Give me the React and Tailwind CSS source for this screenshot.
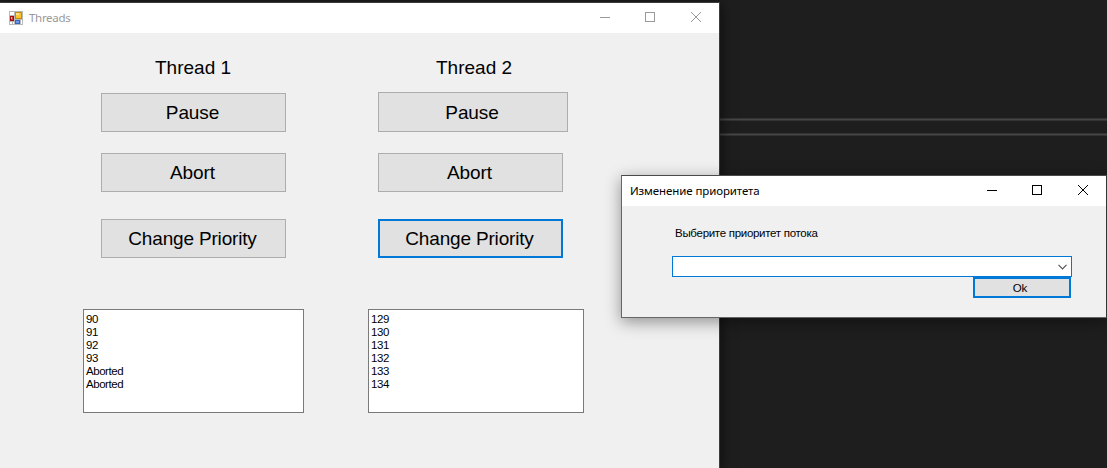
const buttonBase =
  "flex items-center justify-center bg-[#e1e1e1] text-[19px] leading-[22px] text-black whitespace-nowrap";

function CaptionButtons({ className }) {
  return (
    <div className={`flex h-[30px] shrink-0 ${className}`}>
      <svg width="45" height="30" viewBox="0 0 45 30" fill="none" stroke="currentColor" shapeRendering="crispEdges">
        <path d="M17 14.5h10" />
      </svg>
      <svg width="45" height="30" viewBox="0 0 45 30" fill="none" stroke="currentColor" shapeRendering="crispEdges">
        <rect x="17.5" y="9.5" width="9" height="9" />
      </svg>
      <svg width="46" height="30" viewBox="0 0 46 30" fill="none" stroke="currentColor" strokeWidth="1">
        <path d="M18 9l10 10M28 9l-10 10" />
      </svg>
    </div>
  );
}

function FormIcon() {
  return (
    <svg width="14" height="14" viewBox="0 0 14 14" shapeRendering="crispEdges">
      <rect width="14" height="14" fill="#b9b9b9" />
      <path fill="#fff" d="M1 1h4v3H1zM1 11h2v2H1zM4 11h1v2H4zM12 9h1v4h-1z" />
      <rect x="1" y="5" width="4" height="5" fill="#a01010" />
      <rect x="2" y="6" width="2" height="3" fill="#c93a35" />
      <rect x="2" y="6" width="1" height="2" fill="#f0b0a8" />
      <rect x="6" y="1" width="7" height="7" fill="#c58b0a" />
      <rect x="7" y="2" width="5" height="5" fill="#fbc62c" />
      <rect x="7" y="2" width="3" height="2" fill="#fde287" />
      <rect x="6" y="9" width="5" height="4" fill="#3566c4" />
      <rect x="7" y="10" width="3" height="2" fill="#6c9be8" />
    </svg>
  );
}

function ThreadPanel({ title, titleClass, pauseClass, priorityClass, listClass, items }) {
  return (
    <section className="flex flex-col">
      <h2 className={`h-[22px] text-[19px] leading-[22px] whitespace-nowrap ${titleClass}`}>{title}</h2>
      <button className={`${buttonBase} border border-[#adadad] tracking-[-0.1px] ${pauseClass}`}>Pause</button>
      <button className={`${buttonBase} mt-[21px] h-[39px] w-[185px] border border-[#adadad] ml-[var(--inset)] pr-[2px] tracking-[-0.1px]`}>
        Abort
      </button>
      <button className={`${buttonBase} mt-[27px] h-[39px] w-[185px] ml-[var(--inset)] pr-[2px] tracking-[-0.17px] ${priorityClass}`}>
        Change Priority
      </button>
      <ul
        className={`mt-[51px] h-[104px] border border-[#7a7a7a] bg-white pt-[3px] pl-[2px] text-[11.5px] leading-[13px] tracking-[-0.45px] ${listClass}`}
      >
        {items.map((item, i) => (
          <li key={i}>{item}</li>
        ))}
      </ul>
    </section>
  );
}

function ThreadsWindow() {
  return (
    <main className="absolute top-[2px] left-0 flex h-[466px] w-[720px] flex-col border-t border-r border-[#3c3c3c] bg-[#f0f0f0] shadow-[2px_2px_12px_rgba(0,0,0,0.5)]">
      <header className="flex h-[30px] shrink-0 items-center bg-white pl-[9px]">
        <FormIcon />
        <span className="ml-[6px] flex-1 font-['Noto_Sans',sans-serif] text-[11.5px] tracking-[-0.3px] text-[#999999]">Threads</span>
        <CaptionButtons className="text-[#999999]" />
      </header>
      <div className="flex gap-[64px] pt-[24px] pl-[83px]">
        <div className="[--inset:18px]">
          <ThreadPanel
            title="Thread 1"
            titleClass="pl-[72px]"
            pauseClass="mt-[14px] ml-[18px] h-[39px] w-[185px] pr-[2px]"
            priorityClass="border border-[#adadad]"
            listClass="w-[221px]"
            items={["90", "91", "92", "93", "Aborted", "Aborted"]}
          />
        </div>
        <div className="[--inset:10px]">
          <ThreadPanel
            title="Thread 2"
            titleClass="pl-[68px]"
            pauseClass="mt-[13px] ml-[10px] h-[40px] w-[190px] pt-[2px] pr-[2px]"
            priorityClass="border-2 border-[#0078d7]"
            listClass="w-[216px]"
            items={["129", "130", "131", "132", "133", "134"]}
          />
        </div>
      </div>
    </main>
  );
}

function PriorityDialog() {
  return (
    <div
      role="dialog"
      className="absolute top-[175px] left-[621px] flex h-[143px] w-[486px] flex-col border border-[#666666] border-t-[#4a4a4a] border-r-[#333333] bg-[#f0f0f0] shadow-[0_4px_15px_rgba(0,0,0,0.4)]"
    >
      <header className="flex h-[30px] shrink-0 items-center bg-white pl-[8px]">
        <span className="flex-1 font-['Noto_Sans',sans-serif] text-[11.5px] tracking-[-0.1px] text-black">Изменение приоритета</span>
        <CaptionButtons className="text-black" />
      </header>
      <div className="flex flex-col pl-[50px]">
        <label className="mt-[21px] ml-[3px] h-[13px] text-[11.5px] leading-[13px] tracking-[-0.29px]">
          Выберите приоритет потока
        </label>
        <div className="mt-[16px] flex h-[21px] w-[400px] items-center justify-end border border-[#0078d7] bg-white pr-[4px]">
          <svg width="9" height="6" viewBox="0 0 9 6" fill="none" stroke="#555555" strokeWidth="1.2">
            <path d="M0.5 0.8l4 4 4-4" />
          </svg>
        </div>
        <button className="ml-[301px] flex h-[21px] w-[98px] items-center justify-center border-2 border-[#0078d7] bg-[#e1e1e1] pt-px pr-[4px] text-[11.5px] leading-[13px] tracking-[-0.2px]">
          Ok
        </button>
      </div>
    </div>
  );
}

export default function App() {
  return (
    <div className="relative flex h-[468px] w-[1107px] flex-col overflow-hidden bg-[#1e1e1e] font-['Liberation_Sans',Arial,sans-serif] text-black">
      <div className="mt-[118px] h-[3px] border-y border-[#333333] bg-[#464646]" />
      <div className="mt-[12px] h-[3px] border-y border-[#333333] bg-[#464646]" />
      <ThreadsWindow />
      <PriorityDialog />
    </div>
  );
}
